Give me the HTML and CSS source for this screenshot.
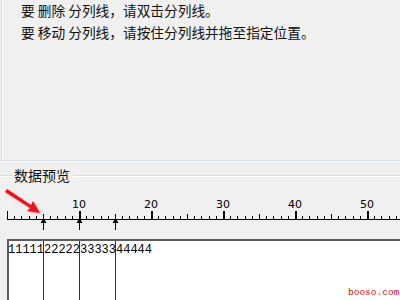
FILE: index.html
```html
<!DOCTYPE html>
<html>
<head>
<meta charset="utf-8">
<link rel="stylesheet" href="styles.css">
</head>
<body>
<div class="page">
  <div class="top">
    <div class="line">要 删除 分列线，请双击分列线。</div>
    <div class="line">要 移动 分列线，请按住分列线并拖至指定位置。</div>
  </div>
  <div class="legend"><span class="legend-text">数据预览</span></div>
  <svg class="ruler" width="400" height="57" viewBox="0 0 400 57">
    <g id="ticks" stroke="#000" stroke-width="1" shape-rendering="crispEdges"></g>
    <line x1="7" y1="37.5" x2="400" y2="37.5" stroke="#000" shape-rendering="crispEdges"/>
    <g class="nums" font-family="DejaVu Sans, sans-serif" font-size="11" fill="#000" text-anchor="middle">
      <text x="79" y="26">10</text>
      <text x="151" y="26">20</text>
      <text x="223" y="26">30</text>
      <text x="295" y="26">40</text>
      <text x="367" y="26">50</text>
    </g>
    <g fill="#000" stroke="#000" shape-rendering="crispEdges">
      <line x1="43.5" y1="38" x2="43.5" y2="48"/>
      <line x1="79.5" y1="38" x2="79.5" y2="48"/>
      <line x1="115.5" y1="38" x2="115.5" y2="48"/>
    </g>
    <g fill="#000">
      <polygon points="43.5,36 40.5,41 46.5,41"/>
      <polygon points="79.5,36 76.5,41 82.5,41"/>
      <polygon points="115.5,36 112.5,41 118.5,41"/>
    </g>
  </svg>
  <div class="data">
    <div class="row">11111222223333344444</div>
    <div class="brk" style="left:34px"></div>
    <div class="brk" style="left:70px"></div>
    <div class="brk" style="left:106px"></div>
  </div>
  <svg class="redarrow" width="50" height="40" viewBox="0 0 50 40">
    <defs>
      <filter id="sh" x="-30%" y="-30%" width="160%" height="160%">
        <feGaussianBlur stdDeviation="1.3"/>
      </filter>
    </defs>
    <polygon points="3,5 5,2 29,18 31,14 38,26 25,24 28,21" fill="#f3a3a3" filter="url(#sh)" transform="translate(1,1)"/>
    <polygon points="3,5 5,2 29,18 31,14 38,26 25,24 28,21" fill="#e8141c"/>
  </svg>
  <div class="watermark">booso.com</div>
</div>
<script>
(function(){
  var g=document.getElementById('ticks');
  var ns='http://www.w3.org/2000/svg';
  for(var i=0;i<=55;i++){
    var x=Math.round(7+i*7.2)+0.5;
    var h=i%10===0?8:(i%5===0?5:3);
    var l=document.createElementNS(ns,'line');
    l.setAttribute('x1',x);l.setAttribute('x2',x);
    l.setAttribute('y1',37-h);l.setAttribute('y2',37);
    if(i%10===0&&i>0){l.setAttribute('stroke-width','2');}
    g.appendChild(l);
  }
})();
</script>
</body>
</html>
```
FILE: styles.css
```css
html, body {
  margin: 0;
  padding: 0;
  background: #f0f0f0;
}
.page {
  position: relative;
  width: 400px;
  height: 300px;
  overflow: hidden;
  background: #f0f0f0;
}
.top {
  height: 161px;
  box-sizing: border-box;
  margin-left: 1px;
  border-left: 1px solid #d5dfe5;
  border-bottom: 1px solid #d5dfe5;
  box-shadow: inset 1px 0 #fff, 0 1px #fff;
  padding: 0 0 0 19px;
  font-family: "Noto Sans CJK SC", sans-serif;
  font-size: 13.7px;
  color: #111;
}
.line {
  height: 22px;
  line-height: 20px;
}
.legend {
  display: flex;
  align-items: center;
  margin-top: 7px;
  height: 14px;
}
.legend::before {
  content: "";
  width: 12px;
  height: 1px;
  background: #d5dfe5;
  box-shadow: 0 1px #fff;
}
.legend::after {
  content: "";
  flex: 1;
  height: 1px;
  background: #d5dfe5;
  box-shadow: 0 1px #fff;
}
.legend-text {
  font-family: "Noto Sans CJK SC", sans-serif;
  font-size: 14px;
  line-height: 14px;
  padding: 0 3px 0 2px;
  color: #111;
}
.ruler {
  display: block;
}
.data {
  position: relative;
  margin-left: 7px;
  height: 70px;
  background: #fff;
  border-top: 2px solid #5c5c5c;
  border-left: 2px solid #5c5c5c;
}
.row {
  font-family: "Liberation Mono", monospace;
  font-size: 12px;
  line-height: 14px;
  padding-top: 2px;
  margin-left: -1px;
  color: #000;
}
.brk {
  position: absolute;
  top: 0;
  bottom: 0;
  width: 1px;
  background: #333;
}
.redarrow {
  position: absolute;
  left: 2px;
  top: 187px;
}
.watermark {
  position: absolute;
  left: 348px;
  top: 287px;
  font-family: "Liberation Mono", monospace;
  font-size: 9.5px;
  line-height: 12px;
  color: #d01010;
}
```
